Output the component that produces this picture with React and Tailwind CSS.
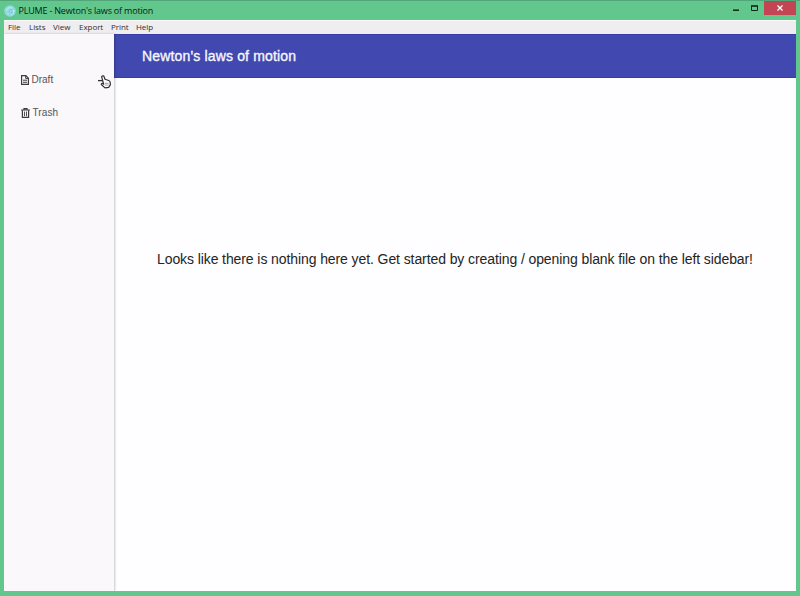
import React from "react";

const MENUS = [
  { label: "File", width: "w-[21px]" },
  { label: "Lists", width: "w-[24px]" },
  { label: "View", width: "w-[26px]" },
  { label: "Export", width: "w-[32px]" },
  { label: "Print", width: "w-[25px]" },
  { label: "Help", width: "w-[26px]" },
];

function AppLogo() {
  return (
    <svg className="h-[12px] w-[12px] shrink-0" viewBox="0 0 12 12" fill="none">
      <circle cx="6" cy="6" r="5.8" fill="#8fd9df" />
      <path d="M2.5 5.5C3 3 6 2 8 3.2M9.5 5c.8 2-.5 4.200-2.500 4.700M4 9C3.200 7 5 5 7 5.500" stroke="#c9f3f5" strokeWidth=".9" />
      <path d="M4 7.500 7.500 4M7 7.800h1.500" stroke="#58acc4" strokeWidth=".8" />
    </svg>
  );
}

function TitleBar() {
  return (
    <div className="flex h-[20px] shrink-0 items-start border-t border-[#50a678]">
      <div className="flex h-[19px] grow items-center pl-[4px]">
        <AppLogo />
        <span className="ml-[2.500px] whitespace-nowrap font-['Open_Sans','Noto_Sans',sans-serif] text-[9px] leading-[12px] tracking-[-0.2px] text-[#0b2014]">
          PLUME - Newton's laws of motion
        </span>
      </div>
      <svg className="mt-[3px] h-[8px] w-[27px]" viewBox="0 0 27 8" fill="none">
        <path d="M0 6.200h6" stroke="#102519" strokeWidth="1.500" />
        <path d="M18.500 2.200V6.500h6V2.200" stroke="#102519" />
        <path d="M18 2h7" stroke="#102519" strokeWidth="1.600" />
      </svg>
      <div className="ml-[4px] mr-[4px] flex h-[14px] w-[32px] justify-center bg-[#c34452] pt-[4px]">
        <svg className="h-[6px] w-[6px]" viewBox="0 0 6 6">
          <path d="M.5.5l5 5M5.500.5l-5 5" stroke="#fff" strokeWidth="1.300" />
        </svg>
      </div>
    </div>
  );
}

function MenuBar() {
  return (
    <div className="flex h-[14px] shrink-0 items-start border-t border-[#fafafa] bg-[#efedef] pl-[4px] font-['Open_Sans','Noto_Sans',sans-serif] text-[8px] leading-[12px] tracking-[-0.05px] text-[#303030]">
      {MENUS.map((m) => (
        <span key={m.label} className={`shrink-0 whitespace-nowrap ${m.width}`}>
          {m.label}
        </span>
      ))}
    </div>
  );
}

function Sidebar() {
  return (
    <div className="relative z-10 w-[110px] shrink-0 bg-[#faf8fb] pl-[17px] pt-[40px] font-['Liberation_Sans',Arial,sans-serif] text-[10px] leading-[12px] text-[#555] shadow-[1px_0_2px_rgba(0,0,0,0.22)]">
      <div className="flex h-[12px] items-center">
        <svg className="h-[10px] w-[8px]" viewBox="0 0 8 10" fill="none" stroke="#3c3c3c">
          <path d="M.6.6h4.200l2.600 2.600v6.200H.6z" strokeWidth="1.200" />
          <path d="M4.700.6v2.800h2.700M2 5.200h4M2 7.300h4" strokeWidth="1" />
        </svg>
        <span className="ml-[2.500px]">Draft</span>
      </div>
      <div className="mt-[21px] flex h-[12px] items-center">
        <svg className="-mt-px h-[10px] w-[9px]" viewBox="0 0 9 10" fill="none" stroke="#3c3c3c">
          <path d="M.1 2h8.800M3 1.900V.6h3v1.300" strokeWidth="1.200" />
          <path d="M1.400 2.200v7.200h6.200V2.200" strokeWidth="1.200" />
          <path d="M3.500 3.600v4.600M5.500 3.600v4.600" strokeWidth=".9" />
        </svg>
        <span className="ml-[2.500px] tracking-[0.1px]">Trash</span>
      </div>
      <svg className="absolute left-[94px] top-[41px] h-[14px] w-[14px]" viewBox="0 0 14 14">
        <path
          d="M4.400.9c.8-.4 1.500 0 1.700.8l.9 2.600 3.700 1.200c1 .4 1.400 1 1.500 1.900l.2 2.300-1.700 2.600-3.700.6-3.400-3.100c-.7-.9.2-1.800 1.200-1.200l.9.6L3.800 2.300C3.600 1.700 3.800 1.100 4.400.9z"
          fill="#fff"
          stroke="#303030"
          strokeWidth="1.200"
          strokeLinejoin="round"
        />
        <path d="M0 5.600h4.800" stroke="#303030" strokeWidth="1.300" />
        <path d="M6.800 8.300h3.800M7.200 10h3.300" stroke="#888" strokeWidth=".8" />
      </svg>
    </div>
  );
}

export default function App() {
  return (
    <div className="flex h-[596px] w-[800px] flex-col overflow-hidden bg-[#61c78d]">
      <TitleBar />
      <div className="mx-[4px] flex h-[571px] flex-col overflow-hidden bg-[#fefdff]">
        <MenuBar />
        <div className="flex min-h-0 grow">
          <Sidebar />
          <div className="flex min-w-0 grow flex-col font-['Liberation_Sans',Arial,sans-serif]">
            <div className="flex h-[44px] shrink-0 items-center border-y border-[#383da8] bg-[#4149b0] pl-[28px]">
              <h1 className="whitespace-nowrap text-[14px] font-medium leading-[18px] tracking-[0.16px] text-[#f6f7ff] [-webkit-text-stroke:0.35px_#f6f7ff]">
                Newton's laws of motion
              </h1>
            </div>
            <p className="ml-[43px] mt-[172px] whitespace-nowrap text-[14px] leading-[18px] tracking-[-0.093px] text-[#242424]">
              Looks like there is nothing here yet. Get started by creating / opening blank file on the left sidebar!
            </p>
          </div>
        </div>
      </div>
    </div>
  );
}
